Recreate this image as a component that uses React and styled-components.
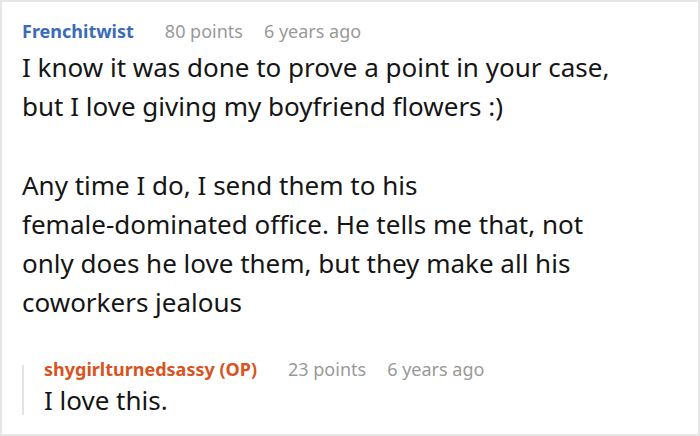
import React from "react";
import styled, { createGlobalStyle } from "styled-components";

const Global = createGlobalStyle`
  html, body { margin: 0; padding: 0; background: #fff; }
  body { font-family: "Noto Sans", sans-serif; }
`;

const Card = styled.div`
  box-sizing: border-box;
  width: 700px;
  height: 436px;
  border: 2px solid #e6e6e6;
  padding: 15px 20px 0 20px;
  overflow: hidden;
`;

const Meta = styled.div`
  display: flex;
  align-items: baseline;
  font-size: 18px;
  line-height: 28px;
  white-space: nowrap;
`;

const Author = styled.span`
  font-weight: 700;
  color: ${(p) => (p.$op ? "#d9531e" : "#3b6bb8")};
  margin-right: 31px;
`;

const Info = styled.span`
  color: #999;
  margin-right: 21px;
`;

const Body = styled.div`
  font-size: 26px;
  line-height: 39px;
  color: #151515;
  margin-top: 3px;
  p { margin: 0; }
  p + p { margin-top: 40px; }
`;

const Reply = styled.div`
  position: relative;
  margin-top: 33px;
  padding-left: 22px;
  &::before {
    content: "";
    position: absolute;
    left: 0;
    top: 10px;
    bottom: 2px;
    width: 2px;
    background: #e3e3e3;
  }
`;

const ReplyBody = styled(Body)`
  margin-top: 0;
  line-height: 34px;
`;

export default function App() {
  return (
    <>
      <Global />
      <Card>
        <Meta>
          <Author>Frenchitwist</Author>
          <Info>80 points</Info>
          <Info>6 years ago</Info>
        </Meta>
        <Body>
          <p>
            I know it was done to prove a point in your case,
            <br />
            but I love giving my boyfriend flowers :)
          </p>
          <p>
            Any time I do, I send them to his
            <br />
            female-dominated office. He tells me that, not
            <br />
            only does he love them, but they make all his
            <br />
            coworkers jealous
          </p>
        </Body>
        <Reply>
          <Meta>
            <Author $op>shygirlturnedsassy (OP)</Author>
            <Info>23 points</Info>
            <Info>6 years ago</Info>
          </Meta>
          <ReplyBody>I love this.</ReplyBody>
        </Reply>
      </Card>
    </>
  );
}
